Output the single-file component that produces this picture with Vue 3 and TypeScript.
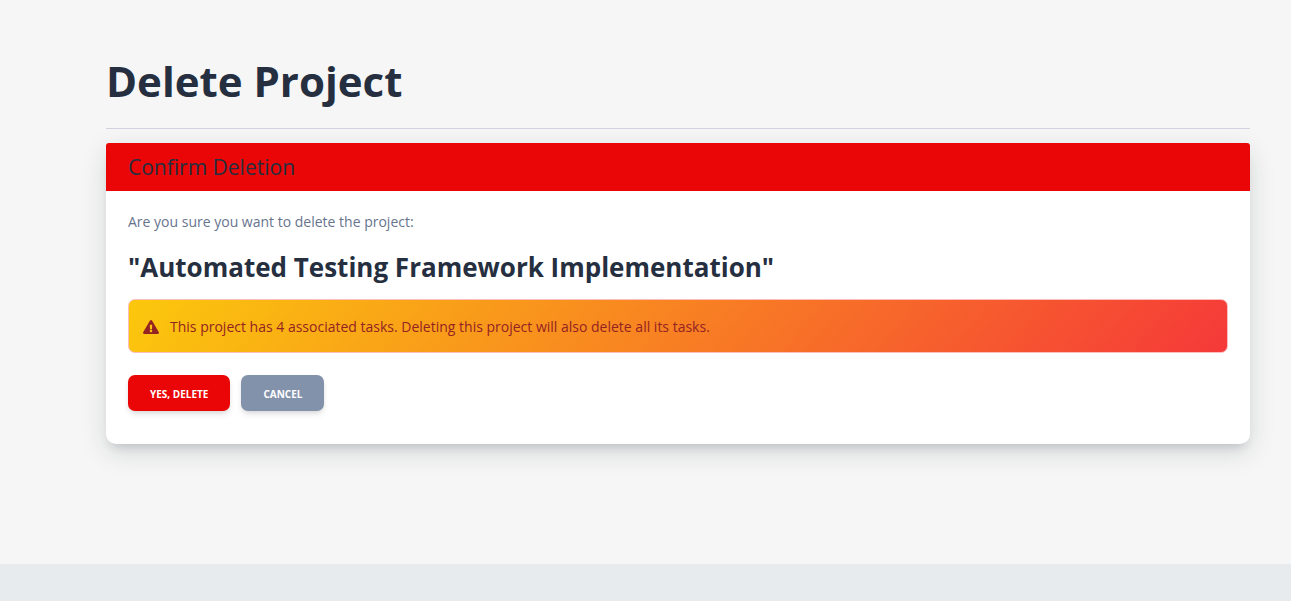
<script setup lang="ts">
import { computed, ref } from 'vue'

const projectName = ref<string>('Automated Testing Framework Implementation')
const taskCount = ref<number>(4)
const warning = computed<string>(
  () =>
    `This project has ${taskCount.value} associated tasks. Deleting this project will also delete all its tasks.`,
)
</script>

<template>
  <div class="page">
    <main class="content">
      <h1 class="page-title">Delete Project</h1>
      <section class="card">
        <header class="card-header">
          <h2 class="card-title">Confirm Deletion</h2>
        </header>
        <div class="card-body">
          <p class="question">Are you sure you want to delete the project:</p>
          <h3 class="project-name">"{{ projectName }}"</h3>
          <div class="alert" role="alert">
            <svg class="alert-icon" viewBox="0 0 576 512" aria-hidden="true">
              <path
                d="M569.5 440C588 472 564.800 512 527.900 512H48.100c-36.900 0-60-40.100-41.600-72L246.400 24c18.500-32 64.700-32 83.200 0l239.900 416zM288 354c-25.400 0-46 20.600-46 46s20.600 46 46 46 46-20.600 46-46-20.600-46-46-46zm-43.700-165.300l7.400 136c.4 6.400 5.600 11.300 12 11.300h48.500c6.400 0 11.600-5 12-11.300l7.400-136c.4-6.900-5.100-12.700-12-12.700h-63.400c-6.900 0-12.300 5.800-11.900 12.700z"
              />
            </svg>
            <span>{{ warning }}</span>
          </div>
          <form class="actions" @submit.prevent>
            <button type="submit" class="btn btn-danger">Yes, Delete</button>
            <button type="button" class="btn btn-secondary">Cancel</button>
          </form>
        </div>
      </section>
    </main>
    <footer class="footer"></footer>
  </div>
</template>

<style>
body {
  margin: 0;
  background: #f6f6f6;
}
</style>

<style scoped>
.page {
  box-sizing: border-box;
  min-height: 100vh;
  display: flex;
  flex-direction: column;
  font-family: "Open Sans", "Noto Sans", sans-serif;
  font-size: 14px;
  line-height: 22px;
  color: #67748e;
}

.content {
  flex: 1;
  padding: 55px 41px 0 106px;
}

.page-title {
  margin: 0 0 14px;
  padding-bottom: 21px;
  border-bottom: 1px solid #d1d4e0;
  font-size: 42px;
  line-height: 52px;
  font-weight: 700;
  color: #252f40;
}

.card {
  border-radius: 10px;
  background: #fff;
  box-shadow: 0 8px 26px 0 rgba(20, 35, 35, 0.15), 0 8px 10px -5px rgba(20, 30, 50, 0.14);
}

.card-header {
  padding: 10px 22px;
  border-radius: 3px 3px 0 0;
  background: #ea0606;
}

.card-title {
  margin: 0;
  font-size: 21px;
  line-height: 28px;
  font-weight: 500;
  color: #252f40;
}

.card-body {
  padding: 20px 22px 33px;
}

.question {
  margin: 0 0 14px;
}

.project-name {
  margin: 0 0 12px;
  font-size: 26px;
  line-height: 40px;
  font-weight: 700;
  color: #252f40;
}

.alert {
  display: flex;
  align-items: center;
  gap: 11px;
  margin-bottom: 22px;
  padding: 16px 14px 14px;
  border: 1px solid #fbbdbd;
  border-radius: 7px;
  background: linear-gradient(310deg, #f53939, #fbc80c);
  color: #932323;
}

.alert-icon {
  width: 16px;
  height: 14px;
  flex: none;
  fill: currentColor;
}

.actions {
  display: flex;
  gap: 11px;
}

.btn {
  padding: 11px 22px 9px;
  border: 0;
  border-radius: 7px;
  font-family: inherit;
  font-size: 10px;
  line-height: 16px;
  font-weight: 700;
  text-transform: uppercase;
  color: #fff;
  cursor: pointer;
  box-shadow: 0 4px 7px -1px rgba(0, 0, 0, 0.11), 0 2px 4px -1px rgba(0, 0, 0, 0.07);
}

.btn-danger {
  background: #ea0606;
}

.btn-secondary {
  background: #8392ab;
}

.footer {
  height: 37px;
  background: #e8ebee;
}
</style>
